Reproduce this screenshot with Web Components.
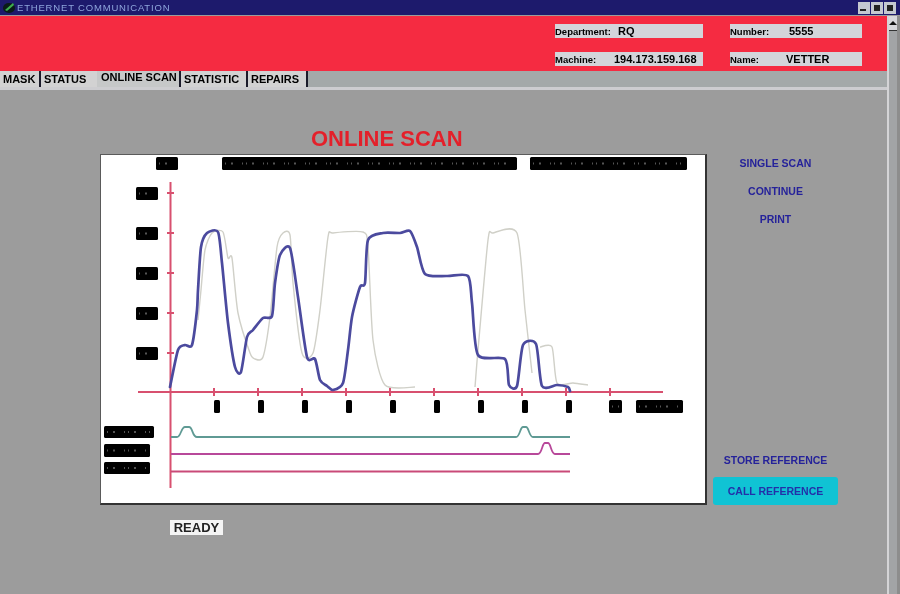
<!DOCTYPE html>
<html>
<head>
<meta charset="utf-8">
<title>Ethernet Communication</title>
<style>
  html, body { margin: 0; padding: 0; background: #9c9c9c; overflow: hidden; }
  body { font-family: "Liberation Sans", Arial, sans-serif; }
</style>
</head>
<body>
<scan-app></scan-app>
<script>
class TitleBar extends HTMLElement {
  constructor() {
    super();
    this.attachShadow({ mode: 'open' });
    this.shadowRoot.innerHTML = `
      <style>
        :host { display: flex; align-items: center; height: 15px; background: #1d1a6c; padding-left: 2px; box-sizing: border-box; }
        .logo { width: 14px; height: 13px; flex: none; }
        .name { margin-left: 1px; flex: 1; color: #8fa6dc; font-size: 9.5px; letter-spacing: 0.82px; filter: blur(0.5px); }
        .btns { display: flex; gap: 1px; padding-right: 4px; }
        .btn { width: 12px; height: 12px; background: #c4c8d0; display: flex; align-items: center; justify-content: center; filter: blur(0.4px); }
        .btn i { display: block; width: 6px; height: 6px; background: #222; }
        .btn:first-child i { height: 2px; margin: 4px 3px 0 0; }
      </style>
      <svg class="logo" viewBox="0 0 14 13">
        <ellipse cx="7" cy="7" rx="6" ry="5" fill="#0a1c18"/>
        <path d="M3 9 L11 2 L12 4 L5 10 Z" fill="#3fae4e"/>
      </svg>
      <span class="name"><slot></slot></span>
      <span class="btns"><span class="btn"><i></i></span><span class="btn"><i></i></span><span class="btn"><i></i></span></span>
    `;
  }
}
customElements.define('title-bar', TitleBar);

class InfoField extends HTMLElement {
  constructor() {
    super();
    this.attachShadow({ mode: 'open' });
  }
  connectedCallback() {
    const offset = this.getAttribute('value-at') || '60';
    this.shadowRoot.innerHTML = `
      <style>
        :host { display: flex; align-items: center; height: 14px; background: #d3d5da; font-size: 9.5px; font-weight: 700; color: #000; white-space: nowrap; }
        .label { width: ${offset}px; flex: none; filter: blur(0.4px); }
        .value { font-size: 11px; filter: blur(0.4px); }
      </style>
      <span class="label">${this.getAttribute('label')}</span><span class="value"><slot></slot></span>
    `;
  }
}
customElements.define('info-field', InfoField);

class TabStrip extends HTMLElement {
  constructor() {
    super();
    this.attachShadow({ mode: 'open' });
    const tabs = ['MASK', 'STATUS', 'ONLINE SCAN', 'STATISTIC', 'REPAIRS'];
    const widths = [41, 56, 84, 67, 60];
    this.shadowRoot.innerHTML = `
      <style>
        :host { display: flex; height: 19px; box-sizing: border-box; background: #a4a9a9; border-bottom: 3px solid #cdcdd0; }
        .tab { box-sizing: border-box; display: flex; align-items: center; padding-left: 3px; background: #d2d2d2; font-size: 11px; font-weight: 700; color: #000; border-right: 2px solid #1b1b2a; white-space: nowrap; }
        .tab span { filter: blur(0.4px); }
        .tab.next { border-right-color: #d2d2d2; }
        .tab.on { background: #c6c8c8; align-items: flex-start; padding-left: 4px; }
      </style>
      ${tabs.map((t, i) => `<div class="tab${i === 2 ? ' on' : ''}${i === 1 ? ' next' : ''}" style="width:${widths[i]}px"><span>${t}</span></div>`).join('')}
    `;
  }
}
customElements.define('tab-strip', TabStrip);

class ScanChart extends HTMLElement {
  constructor() {
    super();
    this.attachShadow({ mode: 'open' });
  }
  bar(x, y, w, h) {
    return `<rect x="${x}" y="${y}" width="${w}" height="${h}" rx="1.5" fill="#000"/>` +
      (w > 12 ? `<line x1="${x + 3}" x2="${x + w - 3}" y1="${y + h / 2}" y2="${y + h / 2}" stroke="#555" stroke-width="2" stroke-dasharray="1 5 2 9 1 3"/>` : '');
  }
  // round the corners of a polyline a little, the trace is not really angular
  smooth(str) {
    const p = str.split(' ').map(s => s.split(',').map(Number));
    let d = `M${p[0][0]} ${p[0][1]}`;
    for (let i = 0; i < p.length - 1; i++) {
      const a = p[i - 1] || p[i], b = p[i], c = p[i + 1], e = p[i + 2] || c;
      const k = 0.12;
      d += ` C${(b[0] + (c[0] - a[0]) * k).toFixed(1)} ${(b[1] + (c[1] - a[1]) * k).toFixed(1)} ${(c[0] - (e[0] - b[0]) * k).toFixed(1)} ${(c[1] - (e[1] - b[1]) * k).toFixed(1)} ${c[0]} ${c[1]}`;
    }
    return d;
  }
  connectedCallback() {
    const blue = '170,387 178,350 185,345 192,345 197,310 198,290 201,247 207,233 218,232 222,263 228,323 235,367 241,372 247,337 253,330 263,318 272,316 275,283 280,255 290,248 298,297 307,357 315,359 320,380 327,386 333,390 343,383 348,350 352,317 360,287 365,283 368,240 383,233 400,233 410,231 417,247 425,274 447,276 468,276 472,303 478,355 505,359 509,385 517,386 523,345 536,344 542,386 557,385 568,387 570,391';
    const gray1 = '198,320 201,290 205,250 212,233 223,232 228,258 232,258 238,313 250,353 255,359 263,357 270,317 277,247 283,233 290,235 293,283 302,353 313,353 320,310 328,237 333,233 363,232 368,247 373,340 385,385 415,387';
    const gray2 = '475,387 478,350 488,240 493,233 517,233 525,310 532,373';
    const gray3 = '540,347 552,347 557,383 573,383 588,385';
    const ticksX = [214, 258, 302, 346, 390, 434, 478, 522, 566, 610];
    const ticksY = [193, 233, 273, 313, 353];
    this.shadowRoot.innerHTML = `
      <style>
        :host { display: block; width: 607px; height: 351px; box-sizing: border-box; background: #fff; border: 1px solid #5a5a5a; border-right-width: 2px; border-bottom-width: 2px; border-bottom-color: #333; border-right-color: #333; }
        svg { display: block; width: 100%; height: 100%; filter: blur(0.5px); }
      </style>
      <svg viewBox="101 155 604 348" preserveAspectRatio="none">
        ${this.bar(156, 157, 22, 13)}
        ${this.bar(222, 157, 295, 13)}
        ${this.bar(530, 157, 157, 13)}
        ${ticksY.map(y => this.bar(136, y - 6, 22, 13)).join('')}
        ${ticksX.slice(0, 9).map(x => this.bar(x, 400, 6, 13)).join('')}
        ${this.bar(609, 400, 13, 13)}
        ${this.bar(636, 400, 47, 13)}
        ${this.bar(104, 426, 50, 12)}
        ${this.bar(104, 444, 46, 13)}
        ${this.bar(104, 462, 46, 12)}
        <g fill="none" stroke="#d0d0c8" stroke-width="1.4">
          <path d="${this.smooth(gray1)}"/><path d="${this.smooth(gray2)}"/><path d="${this.smooth(gray3)}"/>
        </g>
        <g stroke="#d8506f" stroke-width="2" fill="none">
          <line x1="170.5" y1="182" x2="170.5" y2="488"/>
          <line x1="138" y1="392" x2="663" y2="392"/>
          ${ticksX.map(x => `<line x1="${x}" x2="${x}" y1="388" y2="396"/>`).join('')}
          ${ticksY.map(y => `<line x1="167" x2="174" y1="${y}" y2="${y}"/>`).join('')}
        </g>
        <path d="${this.smooth(blue)}" fill="none" stroke="#4b4a9e" stroke-width="2.7" stroke-linecap="round"/>
        <g fill="none" stroke-width="1.8">
          <path d="M171 437 H177 C181 437 181 427 185 427 H189 C193 427 192 437 197 437 H516 C520 437 520 427 523 427 H526 C529 427 529 437 533 437 H570" stroke="#5f9a94"/>
          <path d="M171 454 H538 C542 454 542 443 545 443 H548 C551 443 551 454 555 454 H570" stroke="#b8489a"/>
          <path d="M171 471.5 H570" stroke="#c94a78"/>
        </g>
      </svg>
    `;
  }
}
customElements.define('scan-chart', ScanChart);

class SideAction extends HTMLElement {
  constructor() {
    super();
    this.attachShadow({ mode: 'open' });
    this.shadowRoot.innerHTML = `
      <style>
        :host { display: flex; align-items: center; justify-content: center; height: 28px; font-size: 10.5px; font-weight: 700; color: #25229a; white-space: nowrap; }
        :host([filled]) { background: #10c3d4; border-radius: 3px; color: #2330a8; margin-top: 8px; }
        span { filter: blur(0.4px); }
      </style>
      <span><slot></slot></span>
    `;
  }
}
customElements.define('side-action', SideAction);

class ScanApp extends HTMLElement {
  constructor() {
    super();
    this.attachShadow({ mode: 'open' });
    this.shadowRoot.innerHTML = `
      <style>
        :host { display: flex; flex-direction: column; width: 900px; height: 594px; background: #9c9c9c; overflow: hidden; font-family: "Liberation Sans", Arial, sans-serif; }
        .body { flex: 1; display: flex; min-height: 0; padding-top: 1px; }
        .content { flex: 1; display: flex; flex-direction: column; min-width: 0; }
        .header { height: 55px; box-sizing: border-box; background: #f52b41; display: grid; grid-template-columns: 148px 132px; column-gap: 27px; row-gap: 14px; padding: 8px 25px 0 0; justify-content: end; grid-auto-rows: 14px; }
        .work { flex: 1; display: flex; padding-left: 100px; background: #9c9c9c; min-height: 0; }
        .center { display: flex; flex-direction: column; width: 607px; flex: none; }
        h1 { margin: 39px 0 0 211px; height: 25px; font-size: 22px; line-height: 20px; font-weight: 700; color: #e4202a; white-space: nowrap; filter: blur(0.5px); }
        .ready { margin: 15px 0 0 70px; width: 53px; height: 15px; line-height: 15px; text-align: center; background: #f4f4f4; font-size: 13px; font-weight: 700; color: #222; }
        .ready span { filter: blur(0.4px); display: block; }
        .side { flex: 1; display: flex; flex-direction: column; padding: 59px 49px 0 6px; }
        .side .gap { height: 218px; }
        .scroll { width: 13px; flex: none; box-sizing: border-box; background: #a2a4a6; border-left: 2px solid #d4d4d6; border-right: 3px solid #8d8d8d; position: relative; }
        .up { position: absolute; top: 0; left: 0; right: 0; height: 14px; background: #d8d8dc; border-bottom: 1px solid #333; display: flex; align-items: center; justify-content: center; }
        .up i { width: 0; height: 0; border: 4px solid transparent; border-bottom-color: #111; margin-top: -4px; }
      </style>
      <title-bar>ETHERNET COMMUNICATION</title-bar>
      <div class="body">
        <div class="content">
          <div class="header">
            <info-field label="Department:" value-at="63">RQ</info-field>
            <info-field label="Number:" value-at="59">5555</info-field>
            <info-field label="Machine:" value-at="59">194.173.159.168</info-field>
            <info-field label="Name:" value-at="56">VETTER</info-field>
          </div>
          <tab-strip></tab-strip>
          <div class="work">
            <div class="center">
              <h1>ONLINE SCAN</h1>
              <scan-chart></scan-chart>
              <div class="ready"><span>READY</span></div>
            </div>
            <div class="side">
              <side-action>SINGLE SCAN</side-action>
              <side-action>CONTINUE</side-action>
              <side-action>PRINT</side-action>
              <div class="gap"></div>
              <side-action style="height:18px">STORE REFERENCE</side-action>
              <side-action filled>CALL REFERENCE</side-action>
            </div>
          </div>
        </div>
        <div class="scroll"><div class="up"><i></i></div></div>
      </div>
    `;
  }
}
customElements.define('scan-app', ScanApp);
</script>
</body>
</html>
